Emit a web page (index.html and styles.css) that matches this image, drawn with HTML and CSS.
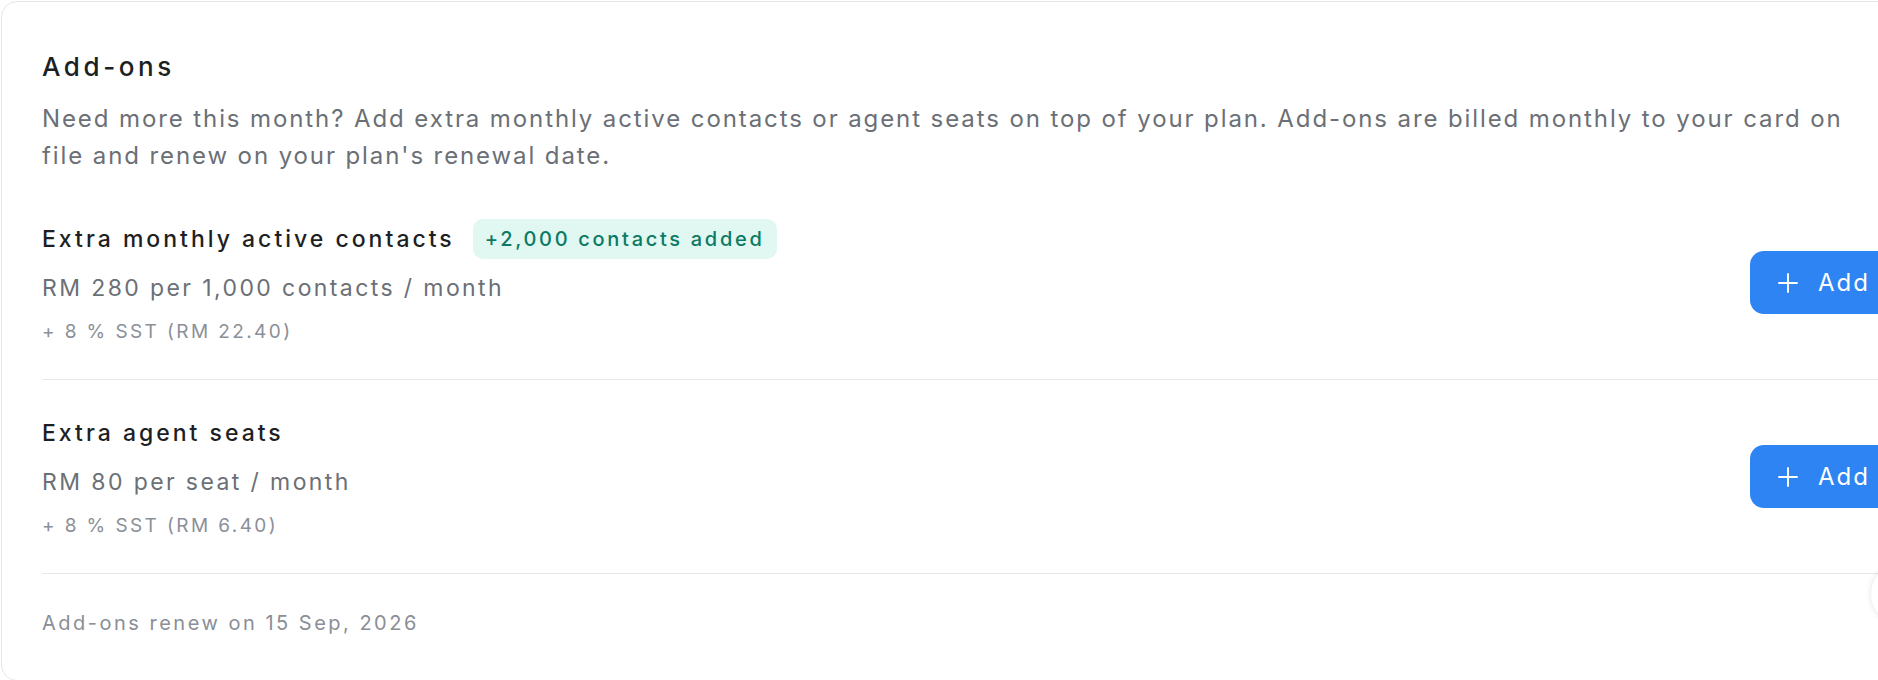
FILE: index.html
```html
<!DOCTYPE html>
<html lang="en">
<head>
<meta charset="utf-8">
<title>Add-ons</title>
<link rel="stylesheet" href="styles.css">
</head>
<body>
<div class="page">
  <section class="card">
    <header class="card-head">
      <h2 class="card-title">Add-ons</h2>
      <p class="card-desc">Need more this month? Add extra monthly active contacts or agent seats on top of your plan. Add-ons are billed monthly to your card on file and renew on your plan's renewal date.</p>
    </header>

    <div class="addon-row">
      <div class="addon-info">
        <div class="addon-title-line">
          <span class="addon-title">Extra monthly active contacts</span>
          <span class="badge">+2,000 contacts added</span>
        </div>
        <div class="addon-price">RM 280 per 1,000 contacts / month</div>
        <div class="addon-tax">+ 8 % SST (RM 22.40)</div>
      </div>
      <button class="add-btn" type="button">
        <svg class="plus" viewBox="0 0 20 20" width="20" height="20" aria-hidden="true"><path d="M10 1v18M1 10h18" stroke="currentColor" stroke-width="1.9" stroke-linecap="round" fill="none"/></svg>
        <span>Add</span>
      </button>
    </div>

    <div class="addon-row">
      <div class="addon-info">
        <div class="addon-title-line">
          <span class="addon-title">Extra agent seats</span>
        </div>
        <div class="addon-price">RM 80 per seat / month</div>
        <div class="addon-tax">+ 8 % SST (RM 6.40)</div>
      </div>
      <button class="add-btn" type="button">
        <svg class="plus" viewBox="0 0 20 20" width="20" height="20" aria-hidden="true"><path d="M10 1v18M1 10h18" stroke="currentColor" stroke-width="1.9" stroke-linecap="round" fill="none"/></svg>
        <span>Add</span>
      </button>
    </div>

    <footer class="card-foot">Add-ons renew on 15 Sep, 2026</footer>
  </section>
</div>
<div class="float-circle"></div>
</body>
</html>
```

FILE: styles.css
```css
html, body {
  margin: 0;
  padding: 0;
  overflow: hidden;
  background: #ffffff;
}

body {
  font-family: Inter, "Noto Sans", "Liberation Sans", sans-serif;
  color: #1d1f23;
}

.page {
  padding: 1px 0 0 1px;
}

.card {
  width: 1934px;
  box-sizing: border-box;
  border: 1px solid #e6e7ea;
  border-radius: 16px;
  padding: 48px 40px 42px 40px;
  background: #fff;
}

.card-title {
  margin: 0;
  font-size: 26px;
  line-height: 34px;
  font-weight: 500;
  letter-spacing: 3.6px;
  color: #1d1f23;
}

.card-desc {
  max-width: 1825px;
  margin: 16px 0 0 0;
  font-size: 24px;
  line-height: 37px;
  letter-spacing: 1.9px;
  color: #6b6f76;
}

.card-head {
  padding-bottom: 12px;
}

.addon-row {
  display: flex;
  align-items: center;
  justify-content: space-between;
  padding: 33px 0;
  border-bottom: 1px solid #e7e8eb;
}

.addon-info {
  display: flex;
  flex-direction: column;
}

.addon-title-line {
  display: flex;
  align-items: center;
  gap: 18px;
  height: 40px;
  margin-bottom: 12px;
}

.addon-title {
  font-size: 23px;
  line-height: 40px;
  font-weight: 500;
  letter-spacing: 3px;
  color: #1d1f23;
}

.badge {
  display: inline-flex;
  align-items: center;
  height: 40px;
  padding: 0 12px;
  border-radius: 10px;
  background: #e1f7f2;
  color: #0b7a63;
  font-size: 20px;
  font-weight: 500;
  letter-spacing: 2.7px;
}

.addon-price {
  font-size: 23px;
  line-height: 34px;
  letter-spacing: 2.4px;
  color: #6b6f76;
  margin-bottom: 13px;
}

.addon-tax {
  font-size: 19px;
  line-height: 28px;
  letter-spacing: 2.4px;
  color: #8b8f97;
}

.add-btn {
  display: inline-flex;
  align-items: center;
  gap: 20px;
  height: 63px;
  padding: 0 24px 0 28px;
  border: none;
  border-radius: 14px;
  background: #2d84f2;
  color: #ffffff;
  font-family: inherit;
  font-size: 24px;
  font-weight: 400;
  letter-spacing: 2px;
  cursor: pointer;
}

.plus {
  display: block;
  flex: none;
}

.card-foot {
  padding-top: 34px;
  font-size: 20px;
  line-height: 30px;
  letter-spacing: 2.5px;
  color: #8a8e96;
}

.float-circle {
  position: fixed;
  left: 1871px;
  top: 563px;
  width: 62px;
  height: 62px;
  border-radius: 50%;
  background: #fff;
  box-shadow: 0 0 6px rgba(0, 0, 0, 0.12);
}
```
